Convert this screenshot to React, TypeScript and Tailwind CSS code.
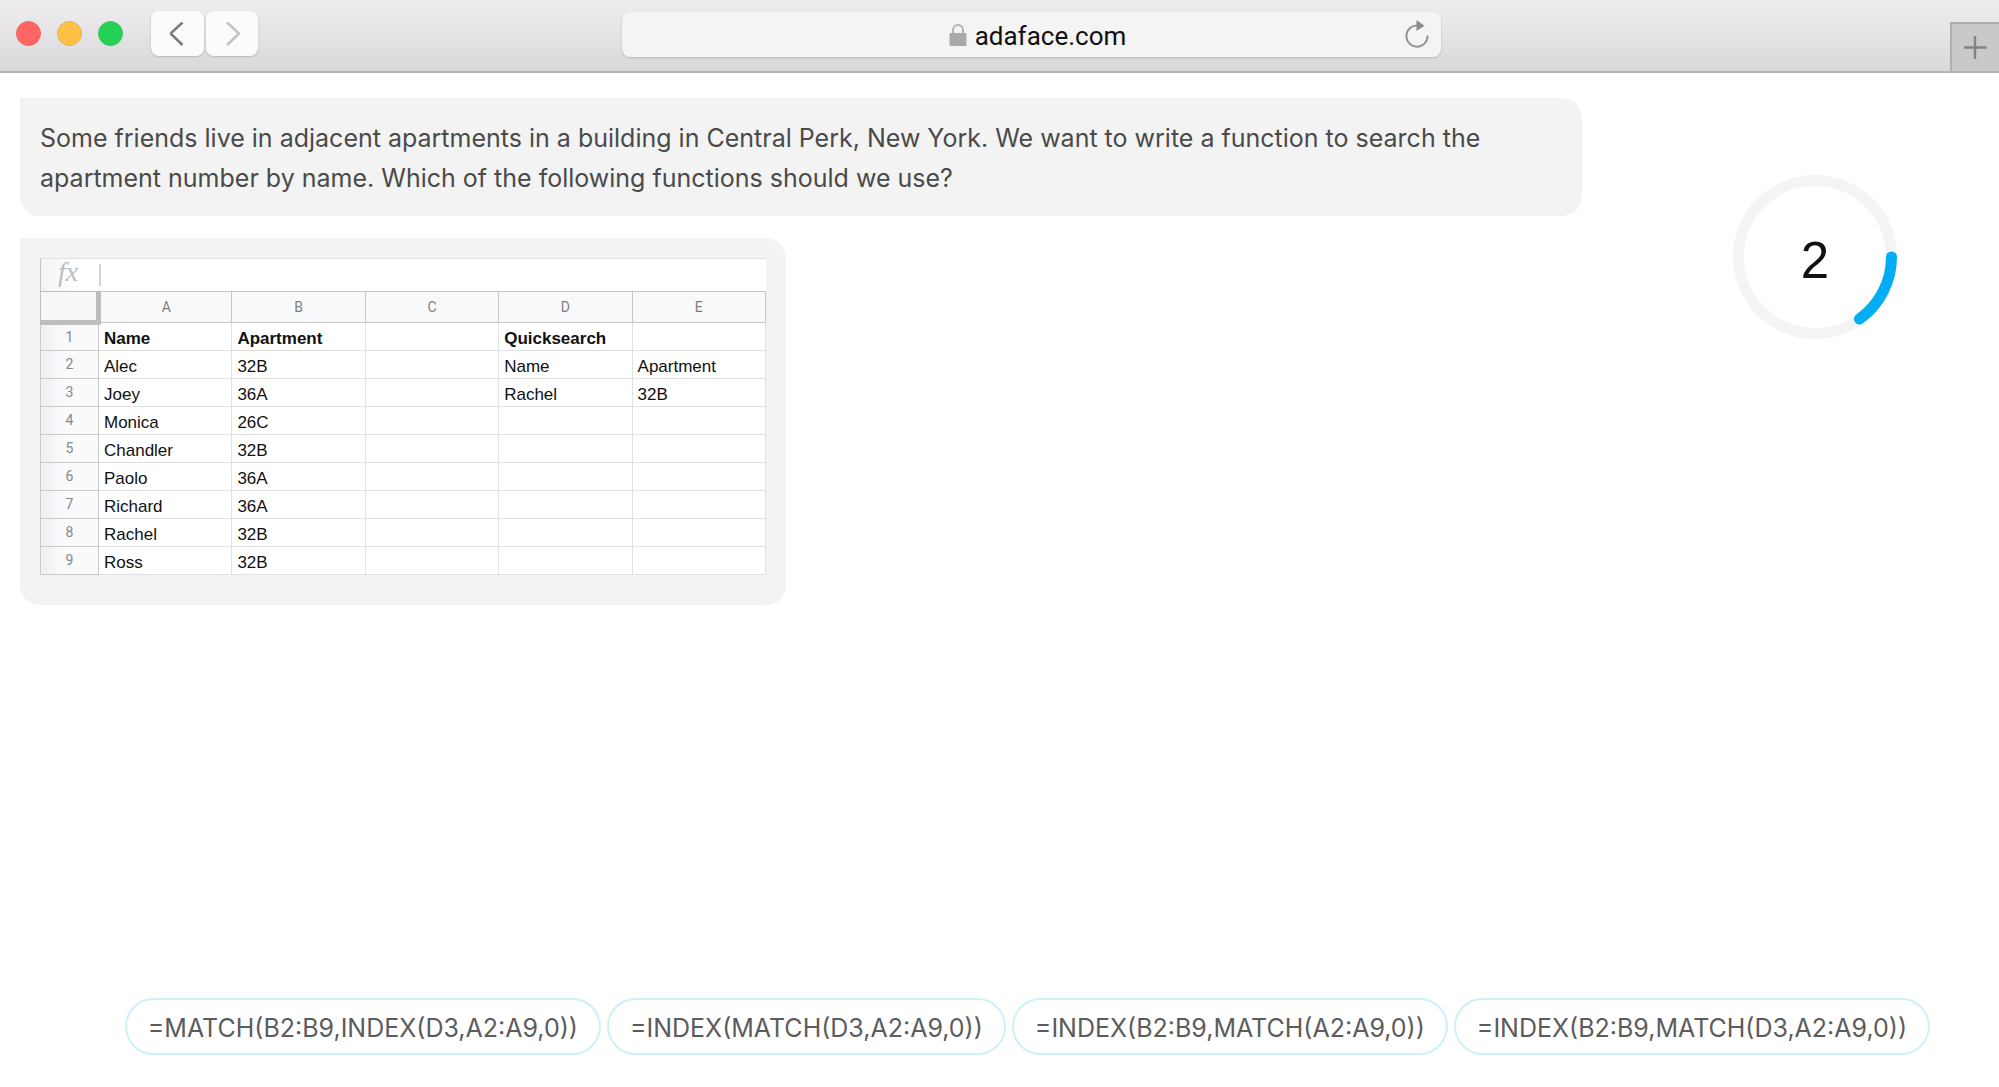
import React from 'react';

const columns = ['A', 'B', 'C', 'D', 'E'];

const rows = [
  ['Name', 'Apartment', '', 'Quicksearch', ''],
  ['Alec', '32B', '', 'Name', 'Apartment'],
  ['Joey', '36A', '', 'Rachel', '32B'],
  ['Monica', '26C', '', '', ''],
  ['Chandler', '32B', '', '', ''],
  ['Paolo', '36A', '', '', ''],
  ['Richard', '36A', '', '', ''],
  ['Rachel', '32B', '', '', ''],
  ['Ross', '32B', '', '', ''],
];

const options = [
  '=MATCH(B2:B9,INDEX(D3,A2:A9,0))',
  '=INDEX(MATCH(D3,A2:A9,0))',
  '=INDEX(B2:B9,MATCH(A2:A9,0))',
  '=INDEX(B2:B9,MATCH(D3,A2:A9,0))',
];

const BrowserBar = () => (
  <header className="flex h-[73px] items-start border-b-2 border-[#b4b3b4] bg-gradient-to-b from-[#efedf0] to-[#d9d8da]">
    <div className="flex w-[31%] items-center pt-[11px] pl-4">
      <div className="flex gap-4">
        <span className="size-[25px] rounded-full border border-[#ee6663] bg-[#fe6664]"></span>
        <span className="size-[25px] rounded-full border border-[#e3b254] bg-[#fec145]"></span>
        <span className="size-[25px] rounded-full border border-[#3cc45e] bg-[#24d155]"></span>
      </div>
      <div className="ml-7 flex gap-0.5">
        <button aria-label="Back" className="flex h-[45px] w-[53px] items-center justify-center rounded-lg bg-[#fbfbfb] shadow-[0_1px_2px_#b5b4b6]">
          <svg className="h-6 w-4" viewBox="0 0 16 24" fill="none" stroke="#7b7b7b" strokeWidth="2.6">
            <path d="M12.500 0.500L0.500 11.500L12.500 23" />
          </svg>
        </button>
        <button aria-label="Forward" className="flex h-[45px] w-[52px] items-center justify-center rounded-lg bg-[#fbfbfb] shadow-[0_1px_2px_#b5b4b6]">
          <svg className="h-6 w-4" viewBox="0 0 16 24" fill="none" stroke="#c3c3c3" strokeWidth="2.6">
            <path d="M3 0.500L15 11.500L3 23" />
          </svg>
        </button>
      </div>
    </div>

    {/* Address bar */}
    <div className="mt-3 ml-0.5 flex h-[45px] w-[41%] items-center rounded-lg bg-[#f4f4f4] pr-3 shadow-[0_1px_2px_#b5b4b6]">
      <div className="flex flex-1 items-center justify-center gap-2 pl-12">
        <svg className="h-[22px] w-[18px]" viewBox="0 0 18 22">
          <path d="M4 10V6a5 5 0 0 1 10 0v4" fill="none" stroke="#b2b2b2" strokeWidth="2" />
          <rect x="0.5" y="9" width="17" height="13" rx="1" fill="#a9a9a9" />
        </svg>
        <span className="pt-0.5 font-[Roboto,sans-serif] text-[26px] leading-8 text-[#111]">adaface.com</span>
      </div>
      <button aria-label="Reload" className="pb-0.5">
        <svg className="h-7 w-6" viewBox="0 0 24 28">
          <path d="M13 5.5A10.6 10.6 0 1 0 22.600 15.500" fill="none" stroke="#969696" strokeWidth="2" />
          <path d="M11.500 0L19.500 5.700L11.500 11Z" fill="#8c8c8c" />
        </svg>
      </button>
    </div>

    <div className="flex flex-1 justify-end self-end">
      <button aria-label="New tab" className="flex h-[49px] w-[49px] items-center justify-center border-t-2 border-l-2 border-[#b0afb0] bg-[#c9c9ca]">
        <svg className="size-6" viewBox="0 0 24 24" stroke="#838383" strokeWidth="2.4">
          <path d="M11 0V23M-0.500 11.500H22.500" />
        </svg>
      </button>
    </div>
  </header>
);

const Spreadsheet = () => (
  <div className="w-[766px] rounded-[20px] rounded-tl-none bg-[#f3f3f3] px-5 pt-5 pb-[30px] font-['Liberation_Sans',Arial,sans-serif]">
    {/* Formula bar */}
    <div className="flex h-[33px] items-center border-t border-l border-t-[#e2e2e2] border-l-[#c4c6c8] bg-gradient-to-r from-[#f1f4f6] via-white via-5% to-white">
      <span className="w-[58px] pr-1 pb-1.5 text-center font-['Liberation_Serif',serif] text-[28px] leading-7 text-[#bdbdbd] italic">fx</span>
      <span className="h-[22px] w-0.5 bg-[#d4d4d4]"></span>
    </div>
    <table className="w-full table-fixed border-collapse bg-white">
      <thead>
        <tr className="h-[31px]">
          <th className="w-[58px] border border-r-[5px] border-b-[5px] border-[#bcbdbe] bg-[#f6f8fa]"></th>
          {columns.map((col) => (
            <th key={col} scope="col" className="border border-[#c4c5c6] bg-[#f8f9fb] p-0 font-[Roboto,sans-serif] text-[14px] leading-5 font-normal text-[#7d7f82]">
              {col}
            </th>
          ))}
        </tr>
      </thead>
      <tbody>
        {rows.map((row, i) => (
          <tr key={i} className="h-7">
            <th scope="row" className="border border-[#c8cacc] bg-gradient-to-r from-[#edf1f4] to-[#f9fafc] to-40% p-0 pb-0.5 font-[Roboto,sans-serif] text-[14px] leading-5 font-normal text-[#85878a]">
              {i + 1}
            </th>
            {row.map((cell, j) => (
              <td key={j} className={`border border-[#e2e2e2] p-0 pt-1 pl-[5px] text-[17px] leading-5 text-[#111] ${i === 0 ? 'font-bold' : ''}`}>
                {cell}
              </td>
            ))}
          </tr>
        ))}
      </tbody>
    </table>
  </div>
);

const Timer = () => (
  <div className="relative flex size-[166px] items-center justify-center">
    <svg className="absolute inset-0" viewBox="0 0 166 166" fill="none" strokeWidth="11">
      <circle cx="83" cy="83" r="76.500" stroke="#f4f4f4" />
      <path d="M159.500 83A76.500 76.500 0 0 1 127.500 145" stroke="#03adf5" strokeLinecap="round" />
    </svg>
    <span className="relative pt-2 font-['Liberation_Sans',Arial,sans-serif] text-[51px] leading-[56px] text-[#111]">2</span>
  </div>
);

const App = () => {
  return (
    <div className="flex min-h-screen flex-col bg-white font-[Inter,sans-serif]">
      <BrowserBar />
      <main className="flex flex-1 flex-col">
        <div className="flex gap-[150px] pt-[25px] pr-[101px] pl-5">
          <div className="flex flex-1 flex-col gap-[22px]">
            <p className="rounded-[20px] rounded-tl-none bg-[#f3f3f3] pt-5 pr-20 pb-[18px] pl-5 text-[25px] leading-10 text-[#4a4a4a]">
              Some friends live in adjacent apartments in a building in Central Perk, New York. We want to write a function to search the apartment number by name. Which of the following functions should we use?
            </p>
            <Spreadsheet />
          </div>
          <div className="pt-[76px]">
            <Timer />
          </div>
        </div>

        {/* Answer options */}
        <div className="mt-auto flex justify-end gap-1.5 pr-[69px] pb-8">
          {options.map((option) => (
            <button key={option} className="h-[57px] rounded-full border-2 border-[#cdf1f9] bg-white px-[21px] pt-0.5 text-[25px] leading-8 whitespace-nowrap text-[#5c5c5c]">
              {option}
            </button>
          ))}
        </div>
      </main>
    </div>
  );
};

export default App;
